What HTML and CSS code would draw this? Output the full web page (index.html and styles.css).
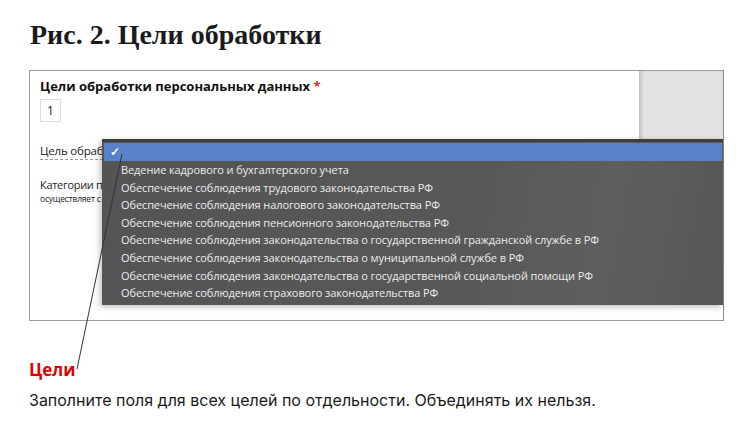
FILE: index.html
```html
<!DOCTYPE html>
<html lang="ru">
<head>
  <meta charset="UTF-8">
  <meta name="viewport" content="width=device-width, initial-scale=1.0">
  <title>Цели обработки</title>
  <link rel="stylesheet" href="styles.css">
</head>
<body>
  <section class="figure">
    <h1 class="fig-title">Рис. 2. Цели обработки</h1>

    <div class="shot">
      <div class="form">
        <h2 class="form-title">Цели обработки персональных данных <span class="req">*</span></h2>
        <div class="num-box">1</div>
        <div class="clip">
          <div class="field dashed">Цель обраб</div>
          <div class="field cats">Категории п</div>
          <div class="hint">осуществляет с</div>
        </div>
      </div>
      <div class="side"></div>

      <ul class="dropdown">
        <li class="opt selected"><span class="check">&#10003;</span></li>
        <li class="opt">Ведение кадрового и бухгалтерского учета</li>
        <li class="opt">Обеспечение соблюдения трудового законодательства РФ</li>
        <li class="opt">Обеспечение соблюдения налогового законодательства РФ</li>
        <li class="opt">Обеспечение соблюдения пенсионного законодательства РФ</li>
        <li class="opt">Обеспечение соблюдения законодательства о государственной гражданской службе в РФ</li>
        <li class="opt">Обеспечение соблюдения законодательства о муниципальной службе в РФ</li>
        <li class="opt">Обеспечение соблюдения законодательства о государственной социальной помощи РФ</li>
        <li class="opt">Обеспечение соблюдения страхового законодательства РФ</li>
      </ul>
    </div>

    <p class="note-title">Цели</p>
    <p class="note-text">Заполните поля для всех целей по отдельности. Объединять их нельзя.</p>

    <svg class="pointer" width="750" height="429" viewBox="0 0 750 429">
      <line x1="122" y1="154" x2="77" y2="369" stroke="#333" stroke-width="1"/>
    </svg>
  </section>
</body>
</html>
```

FILE: styles.css
```css
*{
  padding: 0;
  margin: 0;
  box-sizing: border-box;
}
body{
  background: #fff;
  color: #1a1a1a;
  font-family: "Open Sans", "Liberation Sans", sans-serif;
}
.figure{
  padding: 0 26px 0 29px;
}
.fig-title{
  font-family: "Liberation Serif", "DejaVu Serif", serif;
  font-size: 28px;
  font-weight: bold;
  line-height: 32px;
  padding: 19px 0 0 1px;
  height: 70px;
  color: #1b1b1b;
}
.shot{
  position: relative;
  display: flex;
  align-items: flex-start;
  height: 251px;
  border: 1px solid #9a9a9a;
  border-right-color: #8a8a8a;
}
.form{
  flex: 1;
  padding: 6px 10px;
}
.side{
  width: 84px;
  height: 69px;
  background: #e3e3e3;
  box-shadow: inset 4px 0 4px -2px rgba(0,0,0,.18);
}
.form-title{
  font-size: 13px;
  font-weight: bold;
  line-height: 18px;
  color: #111;
}
.req{
  color: #e0281e;
}
.num-box{
  width: 21px;
  height: 23px;
  margin-top: 4px;
  border: 1px solid #ddd;
  font-size: 12px;
  line-height: 21px;
  text-align: center;
}
.clip{
  width: 62px;
  overflow: hidden;
  white-space: nowrap;
}
.field{
  font-size: 11.5px;
  line-height: 16px;
  letter-spacing: -0.2px;
  color: #222;
}
.dashed{
  display: inline-block;
  margin-top: 21px;
  border-bottom: 1px dashed #999;
}
.cats{
  margin-top: 17px;
  font-size: 11px;
  letter-spacing: -0.3px;
}
.hint{
  font-size: 8.5px;
  line-height: 12px;
  letter-spacing: -0.2px;
}
.dropdown{
  position: absolute;
  left: 72px;
  top: 68px;
  right: 0;
  height: 166px;
  list-style: none;
  background: linear-gradient(100deg, #545454 0%, #585858 60%, #5e5e5e 80%, #565656 100%);
  border-top: 3px solid #3e3e3e;
  padding: 1px 1px 3px 2px;
  box-shadow: -2px 2px 6px rgba(0,0,0,.25);
}
.opt{
  height: 17.6px;
  line-height: 17.6px;
  padding-left: 17px;
  font-size: 11px;
  letter-spacing: -0.1px;
  color: #ececec;
  white-space: nowrap;
}
.opt.selected{
  height: 18px;
  background: #5881c7;
  padding-left: 6px;
}
.check{
  font-size: 12px;
  font-weight: bold;
  color: #fff;
}
.note-title{
  margin-top: 38px;
  font-size: 17px;
  font-weight: bold;
  line-height: 22px;
  color: #e00000;
}
.note-text{
  margin-top: 8px;
  font-family: "Inter", "Noto Sans", sans-serif;
  font-size: 16px;
  line-height: 22px;
  color: #1a1a1a;
}
.pointer{
  position: absolute;
  left: 0;
  top: 0;
  pointer-events: none;
}
```
